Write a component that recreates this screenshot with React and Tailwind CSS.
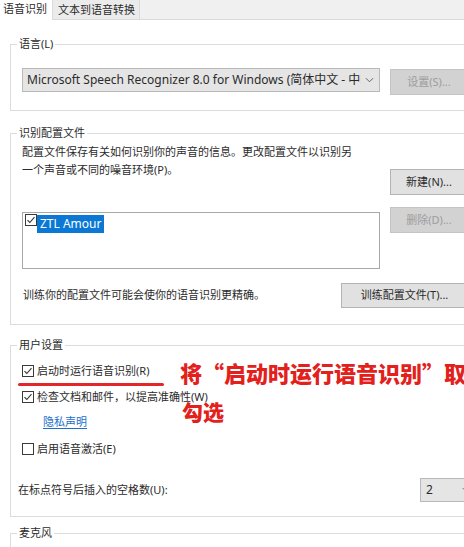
import React from "react";

const Check = ({ checked }) => (
  <span className="w-[12px] h-[12px] border border-[#3a3a3a] bg-white flex items-center justify-center shrink-0">
    {checked && (
      <svg viewBox="0 0 12 12" className="w-[10px] h-[10px]">
        <path d="M1.8 6.2 L4.6 9 L10.2 2.6" fill="none" stroke="#333" strokeWidth="1.3" />
      </svg>
    )}
  </span>
);

const Group = ({ title, className = "", children }) => (
  <fieldset className={"border border-[#dcdcdc] ml-[10px] w-[470px] px-[11px] " + className}>
    <legend className="ml-[-5px] px-[2px] text-[11px] leading-[16px]">{title}</legend>
    {children}
  </fieldset>
);

const Button = ({ children, disabled, className = "" }) => (
  <div
    className={
      "flex items-center justify-center text-[11px] border " +
      (disabled
        ? "bg-[#d2d2d2] border-[#c4c4c4] text-[#9d9d9d] "
        : "bg-[#e1e1e1] border-[#b4b4b4] text-[#2b2b2b] ") +
      className
    }
  >
    {children}
  </div>
);

const Chevron = () => (
  <svg viewBox="0 0 10 6" className="w-[9px] h-[6px] shrink-0">
    <path d="M1 1 L5 5 L9 1" fill="none" stroke="#555" strokeWidth="1" />
  </svg>
);

const CheckRow = ({ checked, label, className = "" }) => (
  <div className={"flex items-center gap-[3px] h-[18px] " + className}>
    <Check checked={checked} />
    <span className="text-[11px] whitespace-nowrap">{label}</span>
  </div>
);

export default function App() {
  return (
    <div className="relative w-[464px] h-[547px] overflow-hidden bg-white text-[#2b2b2b] font-['Noto_Sans','Noto_Sans_CJK_SC',sans-serif]">
      {/* tabs */}
      <div className="flex h-[20px] bg-[#f0f0f0] border-b border-[#dadada]">
        <div className="w-[53px] h-[20px] bg-white pl-[3px] text-[11px] leading-[18px] border-r border-[#dadada]">
          语音识别
        </div>
        <div className="w-[87px] h-[19px] bg-[#ebebeb] pl-[5px] text-[11px] leading-[20px] border-r border-[#dadada]">
          文本到语音转换
        </div>
      </div>

      <Group title="语言(L)" className="mt-[16px] pt-[16px] pb-[15px]">
        <div className="flex items-start gap-[10px]">
          <div className="w-[358px] h-[24px] bg-[#e5e5e5] border border-[#b9b9b9] flex items-center pl-[4px] pr-[5px] gap-[4px]">
            <span className="flex-1 overflow-hidden whitespace-nowrap text-[12px]">
              Microsoft Speech Recognizer 8.0 for Windows (简体中文 - 中国)
            </span>
            <Chevron />
          </div>
          <Button disabled className="w-[78px] h-[26px] mt-[1px]">
            设置(S)...
          </Button>
        </div>
      </Group>

      <Group title="识别配置文件" className="mt-[14px] pt-[2px] pb-[16px]">
        <div className="flex items-start gap-[10px]">
          <div className="w-[358px]">
            <p className="text-[11px] leading-[18px] whitespace-nowrap">
              配置文件保存有关如何识别你的声音的信息。更改配置文件以识别另
              <br />
              一个声音或不同的噪音环境(P)。
            </p>
            <div className="mt-[33px] h-[57px] border border-[#a8a8a8] pt-[1px] pl-[2px]">
              <div className="flex items-start">
                <Check checked />
                <span className="mt-[1px] h-[18px] px-[3px] bg-[#0a78d4] text-white text-[12px] leading-[18px]">
                  ZTL Amour
                </span>
              </div>
            </div>
          </div>
          <div className="w-[78px] pt-[26px] flex flex-col gap-[12px]">
            <Button className="h-[26px]">新建(N)...</Button>
            <Button disabled className="h-[26px]">
              删除(D)...
            </Button>
          </div>
        </div>
        <div className="mt-[14px] flex items-center justify-between">
          <span className="text-[11px] pl-[1px]">训练你的配置文件可能会使你的语音识别更精确。</span>
          <Button className="w-[127px] h-[25px]">训练配置文件(T)...</Button>
        </div>
      </Group>

      <Group title="用户设置" className="mt-[12px] pt-[9px] pb-[14px]">
        <CheckRow checked label="启动时运行语音识别(R)" />
        <CheckRow checked label="检查文档和邮件，以提高准确性(W)" className="mt-[8px]" />
        <div className="mt-[7px] h-[18px] ml-[21px] flex items-center">
          <span className="text-[11px] text-[#1a6fc9] underline underline-offset-2">隐私声明</span>
        </div>
        <CheckRow label="启用语音激活(E)" className="mt-[9px]" />
        <div className="mt-[20px] flex items-center h-[24px] -ml-[4px]">
          <span className="w-[402px] text-[11px]">在标点符号后插入的空格数(U):</span>
          <div className="w-[58px] h-[24px] bg-[#e5e5e5] border border-[#b9b9b9] flex items-center pl-[5px] pr-[6px] justify-between">
            <span className="text-[12px]">2</span>
            <Chevron />
          </div>
        </div>
      </Group>

      <Group title="麦克风" className="mt-[8px] h-[60px]" />

      {/* annotations */}
      <div className="absolute left-[18px] top-[383px] w-[146px] h-[3px] rounded-full bg-[#e3262a]" />
      <div className="absolute left-[180px] top-[360px] whitespace-nowrap text-[22px] leading-[24px] font-black text-[#e3211c] font-['Noto_Sans_CJK_SC',sans-serif]">
        将“启动时运行语音识别”取
      </div>
      <div className="absolute left-[182px] top-[399px] whitespace-nowrap text-[21px] leading-[24px] font-black text-[#e3211c] font-['Noto_Sans_CJK_SC',sans-serif]">
        勾选
      </div>
    </div>
  );
}
